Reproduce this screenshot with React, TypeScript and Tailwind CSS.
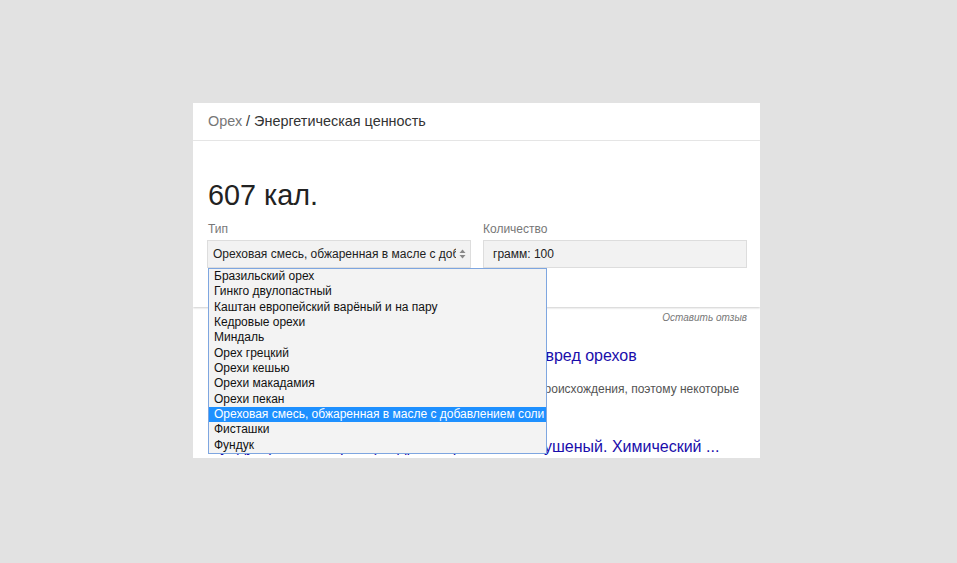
import React from 'react'

const options = [
  'Бразильский орех',
  'Гинкго двулопастный',
  'Каштан европейский варёный и на пару',
  'Кедровые орехи',
  'Миндаль',
  'Орех грецкий',
  'Орехи кешью',
  'Орехи макадамия',
  'Орехи пекан',
  'Ореховая смесь, обжаренная в масле с добавлением соли',
  'Фисташки',
  'Фундук',
]

const selected = 'Ореховая смесь, обжаренная в масле с добавлением соли'

function Arrows() {
  return (
    <svg width="7" height="10" viewBox="0 0 7 10" className="shrink-0">
      <path d="M3.5 0.5 L6.5 4 L0.5 4 Z" fill="#888" />
      <path d="M3.5 9.5 L6.5 6 L0.5 6 Z" fill="#888" />
    </svg>
  )
}

export default function App() {
  return (
    <div
      className="w-[957px] h-[563px] bg-[#e2e2e2] pt-[103px] pl-[193px] overflow-hidden"
      style={{ fontFamily: '"Liberation Sans", Arial, sans-serif' }}
    >
      <div className="w-[567px] h-[355px] bg-white overflow-hidden">
        {/* Breadcrumb */}
        <div className="h-[38px] border-b border-[#e8e8e8] px-[15px] flex items-center text-[14.4px]">
          <span className="text-[#777]">Орех</span>
          <span className="text-[#333] ml-[4px]">/ Энергетическая ценность</span>
        </div>

        {/* Calories card */}
        <div className="relative z-10 bg-white shadow-[0_1px_2px_rgba(0,0,0,0.2)] pl-[14px] pr-[13px] pt-[38px] pb-[39px]">
          <div className="text-[28.8px] leading-[32px] text-[#222] pl-[1px]">607 кал.</div>
          <div className="grid grid-cols-2 gap-[12px] mt-[10px]">
            <div className="relative">
              <div className="text-[12px] leading-[16px] text-[#777] mb-[3px] pl-[1px]">Тип</div>
              <div className="h-[28px] bg-[#f2f2f2] border border-[#ddd] flex items-center pl-[5px] pr-[4px] gap-[3px]">
                <span className="text-[12px] text-[#222] whitespace-nowrap overflow-hidden flex-1">
                  {selected}
                </span>
                <Arrows />
              </div>
              {/* Open select list */}
              <div className="absolute left-[1px] top-full w-[339px] bg-[#f3f3f3] border border-[#7ea6e0]">
                {options.map((o) => (
                  <div
                    key={o}
                    className={`h-[15.35px] leading-[15.35px] text-[12px] pl-[5px] whitespace-nowrap ${
                      o === selected ? 'bg-[#1e90ff] text-white' : 'text-[#111]'
                    }`}
                  >
                    {o}
                  </div>
                ))}
              </div>
            </div>
            <div>
              <div className="text-[12px] leading-[16px] text-[#777] mb-[3px]">Количество</div>
              <div className="h-[28px] bg-[#f2f2f2] border border-[#ddd] flex items-center pl-[9px] text-[12px] text-[#222]">
                грамм: 100
              </div>
            </div>
          </div>
        </div>

        {/* Feedback link */}
        <div className="pl-[15px] pr-[13px] pt-[5px] text-right text-[10px] leading-[12px] italic text-[#777]">
          Оставить отзыв
        </div>

        {/* Results */}
        <div className="pl-[15px] pr-[13px] pt-[22px]">
          <div className="text-[16px] leading-[20px] text-[#1a0dab] whitespace-nowrap">
            Орехи: калорийность, состав, БЖУ, польза и вред орехов
          </div>
          <div className="text-[12px] leading-[16px] text-[#545454] mt-[15px]">
            Орехи являются питательными продуктами растительного происхождения, поэтому некоторые
            витамины в них содержатся.
          </div>
          <div className="text-[16px] leading-[20px] text-[#1a0dab] whitespace-nowrap mt-[24px]">
            Фундук (лесные орехи), ядра, жареный или сушеный. Химический ...
          </div>
          <div className="text-[12px] leading-[16px] text-[#006621] whitespace-nowrap">
            health-diet.ru › base_of_food › sostav › 17473.html
          </div>
        </div>
      </div>
    </div>
  )
}
